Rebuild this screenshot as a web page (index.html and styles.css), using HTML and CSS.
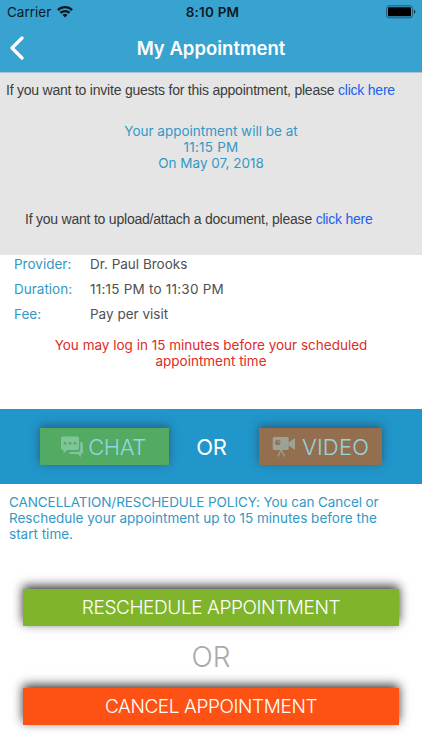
FILE: index.html
```html
<!DOCTYPE html>
<html lang="en">
<head>
  <meta charset="UTF-8" />
  <meta name="viewport" content="width=device-width, initial-scale=1.0"/>
  <title>My Appointment</title>
  <link rel="stylesheet" href="styles.css">
</head>
<body>
  <header class="header">
    <div class="status-bar">
      <div class="carrier">
        <span>Carrier</span>
        <svg width="16" height="12" viewBox="0 0 16 12" fill="none" stroke="#0b1a22" stroke-width="2.2">
          <path d="M0.9 4.1a10.2 10.2 0 0 1 14.2 0" />
          <path d="M3.4 6.9a6.6 6.6 0 0 1 9.2 0" />
          <path d="M8 11.5L5.5 9a3.6 3.6 0 0 1 5 0z" fill="#0b1a22" stroke="none" />
        </svg>
      </div>
      <span class="clock">8:10 PM</span>
      <svg class="battery" width="30" height="14" viewBox="0 0 30 14">
        <rect x="0.6" y="0.8" width="26" height="12" rx="2.6" fill="none" stroke="#1c5a76" />
        <rect x="2" y="2.3" width="23" height="9" rx="1" fill="#000" />
        <path d="M28 4.8q1.4 0.5 1.4 2t-1.4 2z" fill="#14394a" />
      </svg>
    </div>
    <div class="title-bar">
      <a class="back" href="#">
        <svg width="15" height="24" viewBox="0 0 15 24" fill="none" stroke="#fff" stroke-width="3.2" stroke-linecap="round" stroke-linejoin="round">
          <path d="M13 2L3 12l10 10" />
        </svg>
      </a>
      <h1>My Appointment</h1>
    </div>
  </header>

  <section class="summary">
    <p class="invite">If you want to invite guests for this appointment, please <a href="#">click here</a></p>
    <p class="when">Your appointment will be at<br><span class="time">11:15 PM</span><br>On May 07, 2018</p>
    <p class="upload">If you want to upload/attach a document, please <a href="#">click here</a></p>
  </section>

  <section class="details">
    <dl>
      <dt>Provider:</dt><dd>Dr. Paul Brooks</dd>
      <dt>Duration:</dt><dd class="time">11:15 PM to 11:30 PM</dd>
      <dt>Fee:</dt><dd>Pay per visit</dd>
    </dl>
    <p class="warning">You may log in 15 minutes before your scheduled<br>appointment time</p>
  </section>

  <section class="connect">
    <button class="btn chat">
      <svg width="24" height="22" viewBox="0 0 24 22">
        <path d="M20.2 6h1q1.8 0 1.8 2v8q0 2-1.8 2H21v3l-3.5-3H11q-1.7 0-2-2h9.200q2 0 2-2z" fill="#80c59a" />
        <path d="M3 0.500h14q2 0 2 2v9.500q0 2-2 2H7.500L3.500 17.500V14H3q-2 0-2-2V2.500q0-2 2-2z" fill="#80c59a" />
        <g fill="#53aa62">
          <circle cx="5" cy="7.300" r="1.400" />
          <circle cx="10" cy="7.300" r="1.400" />
          <circle cx="15" cy="7.300" r="1.400" />
        </g>
      </svg>
      <span>CHAT</span>
    </button>
    <span class="or">OR</span>
    <button class="btn video">
      <svg width="24" height="22" viewBox="0 0 24 22">
        <path d="M2.200 1h13q1.500 0 1.500 1.500v10q0 1.500-1.500 1.500h-13Q0.700 14 0.700 12.500v-10Q0.700 1 2.200 1z" fill="#9ca396" />
        <path d="M16.500 6.500L23 2v12l-6.500-4.500z" fill="#9ca396" />
        <circle cx="5.800" cy="6.400" r="2.600" fill="#936f50" />
        <circle cx="6.600" cy="5.700" r="0.900" fill="#9ca396" />
        <path d="M9.200 13.500L6 20.500M9.200 13.500l3.300 7" fill="none" stroke="#9ca396" stroke-width="1.200" />
      </svg>
      <span>VIDEO</span>
    </button>
  </section>

  <p class="policy">CANCELLATION/RESCHEDULE POLICY: You can Cancel or<br><span class="line2">Reschedule your appointment up to 15 minutes before the<br>start time.</span></p>

  <section class="actions">
    <button class="btn reschedule">RESCHEDULE APPOINTMENT</button>
    <span class="or-gray">OR</span>
    <button class="btn cancel">CANCEL APPOINTMENT</button>
  </section>
</body>
</html>
```
FILE: styles.css
```css
* {
  box-sizing: border-box;
}

body {
  font-family: Inter, 'Liberation Sans', sans-serif;
  font-size: 13.5px;
  background-color: #fff;
  margin: 0;
  height: 750px;
  overflow: hidden;
}

p, h1, dl, dd {
  margin: 0;
}

a {
  color: #2260ee;
  text-decoration: none;
}

svg {
  display: block;
}

.header {
  height: 73px;
  background-color: #38a3d1;
  border-bottom: 1px solid #a9c3cf;
}

.status-bar {
  display: grid;
  grid-template-columns: 1fr auto 1fr;
  align-items: center;
  height: 24px;
  padding: 0 6px 0 7px;
  color: #0b1a22;
}

.carrier {
  display: flex;
  align-items: center;
  gap: 6px;
}

.clock {
  font-weight: 600;
  letter-spacing: 0.2px;
  padding-left: 2px;
}

.battery {
  justify-self: end;
}

.title-bar {
  display: grid;
  grid-template-columns: 40px 1fr 40px;
  align-items: center;
  height: 47px;
}

.back {
  padding-left: 9px;
}

h1 {
  color: #fff;
  font-size: 18.5px;
  font-weight: 600;
  text-align: center;
}

.summary {
  height: 182px;
  padding-top: 9px;
  background-color: #e5e5e5;
  color: #3c3c3c;
  line-height: 16px;
}

.invite, .upload {
  font-family: 'Liberation Sans', sans-serif;
  font-size: 14px;
  letter-spacing: -0.22px;
  white-space: nowrap;
}

.invite {
  padding-left: 6px;
}

.when {
  margin-top: 25px;
  color: #3498c5;
  text-align: center;
}

.time {
  letter-spacing: 0.22px;
}

.upload {
  margin-top: 40px;
  padding-left: 25px;
}

.details {
  height: 154px;
  padding-top: 1px;
}

dl {
  display: grid;
  grid-template-columns: 76px 1fr;
  padding-left: 14px;
  line-height: 17px;
  row-gap: 8px;
  color: #505050;
}

dt {
  color: #3498c5;
}

.warning {
  margin-top: 14px;
  color: #de2c26;
  line-height: 16px;
  text-align: center;
}

.connect {
  display: grid;
  grid-template-columns: 129px 1fr 123px;
  align-items: center;
  height: 75px;
  padding: 0 40px;
  background-color: #2196cb;
}

.btn {
  display: flex;
  align-items: center;
  justify-content: center;
  height: 37px;
  border: none;
  padding: 0;
  font-family: inherit;
  font-weight: 300;
  color: #fff;
  cursor: pointer;
}

.connect .btn {
  gap: 4px;
  color: #96d5e0;
  font-size: 22px;
  box-shadow: 0 -2px 9px rgba(40,60,75,0.65);
}

.connect .chat {
  padding-right: 3px;
  background-color: #53aa62;
  letter-spacing: -0.4px;
}

.connect .video {
  gap: 6px;
  background-color: #936f50;
  letter-spacing: 0.2px;
}

.or {
  padding-right: 5px;
  color: #fff;
  font-size: 22px;
  letter-spacing: -0.3px;
  text-align: center;
}

.policy {
  height: 105px;
  padding: 10px 0 0 9px;
  color: #3498c5;
  line-height: 16px;
  letter-spacing: -0.08px;
  white-space: nowrap;
}

.line2 {
  letter-spacing: 0;
}

.actions {
  display: flex;
  flex-direction: column;
  padding: 0 23px;
}

.actions .btn {
  font-size: 19px;
  letter-spacing: -0.4px;
  box-shadow: 0 -3px 10px rgba(0,0,0,0.8);
}

.reschedule {
  background-color: #80b42b;
}

.cancel {
  background-color: #fe5214;
}

.or-gray {
  height: 62px;
  line-height: 62px;
  color: #aaa;
  font-size: 28px;
  font-weight: 300;
  text-align: center;
}
```
